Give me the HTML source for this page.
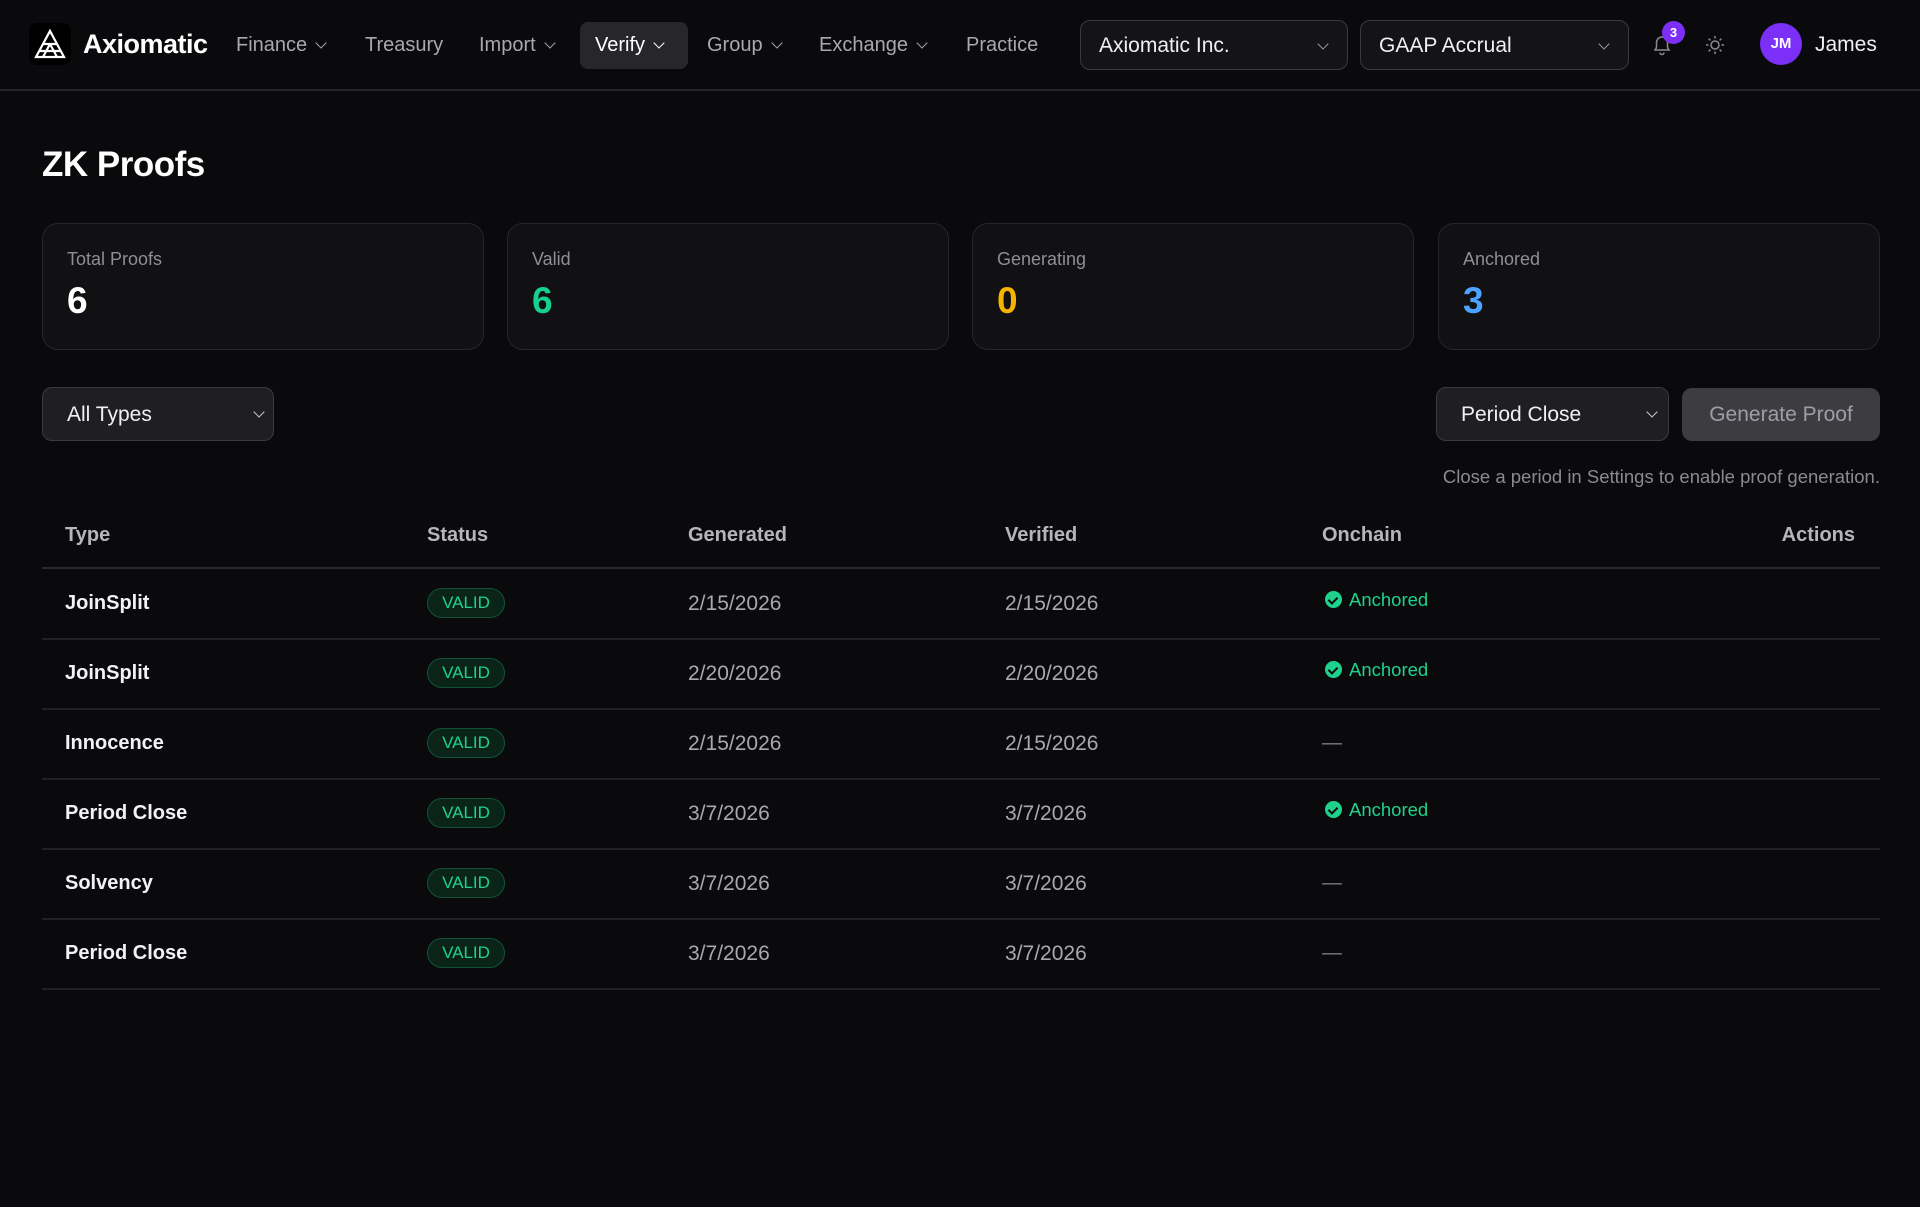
<!DOCTYPE html>
<html><head><meta charset="utf-8"><style>
*{margin:0;padding:0;box-sizing:border-box}
body{width:1920px;height:1207px;background:#0a0a0c;font-family:"Liberation Sans",sans-serif;color:#f2f2f4;position:relative;overflow:hidden}
.a{position:absolute;white-space:nowrap}
.nav{font-size:20px;color:#a8a8b0;top:34px}
.chev{display:inline-block;width:8px;height:8px;border-right:1.5px solid currentColor;border-bottom:1.5px solid currentColor;transform:rotate(45deg);margin-left:10px;position:relative;top:-4px}
.sel{border:1.5px solid #3a3a40;background:#141417;border-radius:10px;font-size:21px;color:#f0f0f2}
.card{top:223px;width:442px;height:127px;border:1.5px solid #26262b;border-radius:16px;background:#111113}
.card .l{position:absolute;left:24px;top:25px;font-size:18px;color:#8e8e96}
.card .v{position:absolute;left:24px;top:56px;font-size:37px;font-weight:bold}
.th{top:524px;font-size:20px;color:#b5b5bc;font-weight:bold}
.line{position:absolute;left:42px;width:1838px;height:1.5px;background:#222226}
.td{font-size:20px}
.t1{color:#f2f2f4;font-weight:bold}
.dt{color:#a8a8b0;font-size:21px}
.badge{width:78px;height:30px;border:1.5px solid #0f5436;background:#0b2419;border-radius:15px;color:#1ed28c;font-size:17px;text-align:center;line-height:27px}
.anc{color:#1ed28c;font-size:18.5px}
.anc i{display:inline-block;width:17px;height:17px;border-radius:50%;background:#1ed28c;vertical-align:-2px;margin-right:7px;position:relative}
.anc i:after{content:"";position:absolute;left:5px;top:3.5px;width:4px;height:7px;border-right:2px solid #0a0a0c;border-bottom:2px solid #0a0a0c;transform:rotate(45deg)}
.dash{color:#7a7a82;font-size:20px}
</style></head><body>
<div class="a" style="left:29px;top:23px;width:42px;height:42px;background:#000;border-radius:8px"></div>
<svg class="a" style="left:33px;top:28px" width="34" height="32" viewBox="0 0 34 32"><g fill="none" stroke="#fff" stroke-width="2.2"><path d="M17 3 L31 29 L3 29 Z"/><path d="M10 16 L24 16 M17 16 L10 29 M17 16 L24 29 M6.5 23 L27.5 23"/></g></svg>
<div class="a" style="left:83px;top:29px;font-size:27px;font-weight:bold;color:#fff;letter-spacing:-0.5px">Axiomatic</div>
<div class="a nav" style="left:236px">Finance<span class="chev"></span></div>
<div class="a nav" style="left:365px">Treasury</div>
<div class="a nav" style="left:479px">Import<span class="chev"></span></div>
<div class="a" style="left:580px;top:22px;width:108px;height:47px;background:#27272b;border-radius:8px"></div>
<div class="a nav" style="left:595px;color:#fff">Verify<span class="chev"></span></div>
<div class="a nav" style="left:707px">Group<span class="chev"></span></div>
<div class="a nav" style="left:819px">Exchange<span class="chev"></span></div>
<div class="a nav" style="left:966px">Practice</div>
<div class="a sel" style="left:1080px;top:20px;width:268px;height:50px;padding:13px 18px">Axiomatic Inc.<span class="chev" style="position:absolute;right:20px;top:19px;color:#999"></span></div>
<div class="a sel" style="left:1360px;top:20px;width:269px;height:50px;padding:13px 18px">GAAP Accrual<span class="chev" style="position:absolute;right:20px;top:19px;color:#999"></span></div>
<svg class="a" style="left:1652px;top:34px" width="20" height="22" viewBox="0 0 20 22"><path d="M3 16 L17 16 L15.5 13.5 L15.5 8.5 A5.5 5.5 0 0 0 4.5 8.5 L4.5 13.5 Z M8 18.5 A2 2 0 0 0 12 18.5" fill="none" stroke="#8a8a92" stroke-width="1.5"/></svg>
<div class="a" style="left:1662px;top:21px;width:23px;height:23px;border-radius:50%;background:#7b2ff7;color:#fff;font-size:13px;font-weight:bold;text-align:center;line-height:23px">3</div>
<svg class="a" style="left:1704px;top:34px" width="22" height="22" viewBox="0 0 22 22"><g stroke="#8a8a92" stroke-width="1.5" fill="none"><circle cx="11" cy="11" r="4"/><path d="M11 2v2.5M11 17.5V20M2 11h2.5M17.5 11H20M4.6 4.6l1.8 1.8M15.6 15.6l1.8 1.8M4.6 17.4l1.8-1.8M15.6 6.4l1.8-1.8"/></g></svg>
<div class="a" style="left:1760px;top:23px;width:42px;height:42px;border-radius:50%;background:#7b2ff7;color:#fff;font-size:15px;font-weight:bold;text-align:center;line-height:42px">JM</div>
<div class="a" style="left:1815px;top:33px;font-size:21px;color:#f0f0f2">James</div>
<div class="a" style="left:0;top:89px;width:1920px;height:1.5px;background:#26262a"></div>

<div class="a" style="left:42px;top:145px;font-size:35px;font-weight:bold;color:#fff;letter-spacing:-0.5px">ZK Proofs</div>
<div class="a card" style="left:42px"><div class="l">Total Proofs</div><div class="v" style="color:#fff">6</div></div>
<div class="a card" style="left:507px"><div class="l">Valid</div><div class="v" style="color:#16d08e">6</div></div>
<div class="a card" style="left:972px"><div class="l">Generating</div><div class="v" style="color:#f5b400">0</div></div>
<div class="a card" style="left:1438px"><div class="l">Anchored</div><div class="v" style="color:#4ea2ff">3</div></div>

<div class="a sel" style="left:42px;top:387px;width:232px;height:54px;padding:15px 24px;background:#1f1f23;border-color:#3a3a40">All Types<span class="chev" style="position:absolute;right:10px;top:20px;color:#ccc"></span></div>
<div class="a sel" style="left:1436px;top:387px;width:233px;height:54px;padding:15px 24px;background:#1f1f23">Period Close<span class="chev" style="position:absolute;right:12px;top:20px;color:#ccc"></span></div>
<div class="a" style="left:1682px;top:388px;width:198px;height:53px;background:#3c3c41;border-radius:10px;color:#9e9ea6;font-size:21px;text-align:center;line-height:53px">Generate Proof</div>
<div class="a" style="right:40px;top:466px;font-size:18.5px;color:#8a8a92">Close a period in Settings to enable proof generation.</div>

<div class="a th" style="left:65px">Type</div>
<div class="a th" style="left:427px">Status</div>
<div class="a th" style="left:688px">Generated</div>
<div class="a th" style="left:1005px">Verified</div>
<div class="a th" style="left:1322px">Onchain</div>
<div class="a th" style="right:65px">Actions</div>
<div class="line" style="top:567px;background:#2a2a2e"></div>

<div class="a td t1" style="left:65px;top:592px">JoinSplit</div><div class="a badge" style="left:427px;top:588px">VALID</div><div class="a td dt" style="left:688px;top:592px">2/15/2026</div><div class="a td dt" style="left:1005px;top:592px">2/15/2026</div><div class="a anc" style="left:1325px;top:589px"><i></i>Anchored</div>
<div class="line" style="top:638px"></div>
<div class="a td t1" style="left:65px;top:662px">JoinSplit</div><div class="a badge" style="left:427px;top:658px">VALID</div><div class="a td dt" style="left:688px;top:662px">2/20/2026</div><div class="a td dt" style="left:1005px;top:662px">2/20/2026</div><div class="a anc" style="left:1325px;top:659px"><i></i>Anchored</div>
<div class="line" style="top:708px"></div>
<div class="a td t1" style="left:65px;top:732px">Innocence</div><div class="a badge" style="left:427px;top:728px">VALID</div><div class="a td dt" style="left:688px;top:732px">2/15/2026</div><div class="a td dt" style="left:1005px;top:732px">2/15/2026</div><div class="a dash" style="left:1322px;top:732px">—</div>
<div class="line" style="top:778px"></div>
<div class="a td t1" style="left:65px;top:802px">Period Close</div><div class="a badge" style="left:427px;top:798px">VALID</div><div class="a td dt" style="left:688px;top:802px">3/7/2026</div><div class="a td dt" style="left:1005px;top:802px">3/7/2026</div><div class="a anc" style="left:1325px;top:799px"><i></i>Anchored</div>
<div class="line" style="top:848px"></div>
<div class="a td t1" style="left:65px;top:872px">Solvency</div><div class="a badge" style="left:427px;top:868px">VALID</div><div class="a td dt" style="left:688px;top:872px">3/7/2026</div><div class="a td dt" style="left:1005px;top:872px">3/7/2026</div><div class="a dash" style="left:1322px;top:872px">—</div>
<div class="line" style="top:918px"></div>
<div class="a td t1" style="left:65px;top:942px">Period Close</div><div class="a badge" style="left:427px;top:938px">VALID</div><div class="a td dt" style="left:688px;top:942px">3/7/2026</div><div class="a td dt" style="left:1005px;top:942px">3/7/2026</div><div class="a dash" style="left:1322px;top:942px">—</div>
<div class="line" style="top:988px"></div>
</body></html>
